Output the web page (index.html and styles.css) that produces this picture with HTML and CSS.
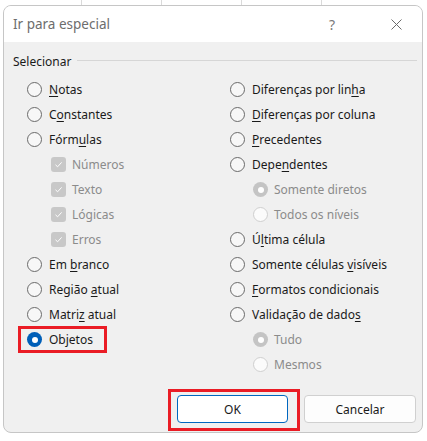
FILE: index.html
```html
<!DOCTYPE html>
<html lang="pt">
<head>
<meta charset="utf-8">
<title>Ir para especial</title>
<link rel="stylesheet" href="styles.css">
</head>
<body>
<div class="sheet">
  <span class="cell"></span><span class="cell"></span><span class="cell"></span><span class="cell"></span>
</div>
<div class="dialog">
  <div class="titlebar">
    <span class="title">Ir para especial</span>
    <span class="help">?</span>
    <span class="close">
      <svg width="11" height="11" viewBox="0 0 11 11"><path d="M0.5 0.5 L10.5 10.5 M10.5 0.5 L0.5 10.5" stroke="#6b6b6b" stroke-width="1" fill="none"/></svg>
    </span>
  </div>
  <div class="content">
    <div class="legend"><span>Selecionar</span></div>
    <div class="columns">
      <div class="col">
        <div class="row"><span class="radio"></span><span class="label"><u>N</u>otas</span></div>
        <div class="row"><span class="radio"></span><span class="label">C<u>o</u>nstantes</span></div>
        <div class="row"><span class="radio"></span><span class="label">Fórm<u>u</u>las</span></div>
        <div class="row sub-check disabled"><span class="check"><svg width="15" height="15" viewBox="0 0 15 15"><path d="M4.5 7.8 L6.6 9.8 L10.6 5.4" stroke="#fff" stroke-width="1" fill="none"/></svg></span><span class="label">Números</span></div>
        <div class="row sub-check disabled"><span class="check"><svg width="15" height="15" viewBox="0 0 15 15"><path d="M4.5 7.8 L6.6 9.8 L10.6 5.4" stroke="#fff" stroke-width="1" fill="none"/></svg></span><span class="label">Texto</span></div>
        <div class="row sub-check disabled"><span class="check"><svg width="15" height="15" viewBox="0 0 15 15"><path d="M4.5 7.8 L6.6 9.8 L10.6 5.4" stroke="#fff" stroke-width="1" fill="none"/></svg></span><span class="label">Lógicas</span></div>
        <div class="row sub-check disabled"><span class="check"><svg width="15" height="15" viewBox="0 0 15 15"><path d="M4.5 7.8 L6.6 9.8 L10.6 5.4" stroke="#fff" stroke-width="1" fill="none"/></svg></span><span class="label">Erros</span></div>
        <div class="row"><span class="radio"></span><span class="label">Em <u>b</u>ranco</span></div>
        <div class="row"><span class="radio"></span><span class="label">Região <u>a</u>tual</span></div>
        <div class="row"><span class="radio"></span><span class="label">Matri<u>z</u> atual</span></div>
        <div class="row marked-item"><span class="radio selected"></span><span class="label">Objetos</span></div>
      </div>
      <div class="col">
        <div class="row"><span class="radio"></span><span class="label">Diferenças por lin<u>h</u>a</span></div>
        <div class="row"><span class="radio"></span><span class="label"><u>D</u>iferenças por coluna</span></div>
        <div class="row"><span class="radio"></span><span class="label"><u>P</u>recedentes</span></div>
        <div class="row"><span class="radio"></span><span class="label">Depe<u>n</u>dentes</span></div>
        <div class="row sub-radio disabled"><span class="radio selected"></span><span class="label">Somente diretos</span></div>
        <div class="row sub-radio disabled"><span class="radio"></span><span class="label">Todos os níveis</span></div>
        <div class="row"><span class="radio"></span><span class="label">Ú<u>l</u>tima célula</span></div>
        <div class="row"><span class="radio"></span><span class="label">Somente células <u>v</u>isíveis</span></div>
        <div class="row"><span class="radio"></span><span class="label"><u>F</u>ormatos condicionais</span></div>
        <div class="row"><span class="radio"></span><span class="label">Validação de dado<u>s</u></span></div>
        <div class="row sub-radio disabled"><span class="radio selected"></span><span class="label">Tudo</span></div>
        <div class="row sub-radio disabled"><span class="radio"></span><span class="label">Mesmos</span></div>
      </div>
    </div>
    <div class="buttons">
      <button class="btn primary marked-btn">OK</button>
      <button class="btn">Cancelar</button>
    </div>
  </div>
</div>
</body>
</html>
```
FILE: styles.css
```css
html, body {
  margin: 0;
  padding: 0;
}
body {
  width: 427px;
  height: 441px;
  background: #ffffff;
  font-family: "Noto Sans", "Liberation Sans", sans-serif;
  overflow: hidden;
}
.sheet {
  height: 5px;
  display: flex;
  padding-left: 81px;
}
.cell {
  width: 80px;
  flex: none;
  border-left: 1px solid #dadada;
  box-sizing: border-box;
}
.dialog {
  margin-left: 3px;
  width: 420px;
  height: 428px;
  box-sizing: border-box;
  border: 1px solid #c6c6c6;
  border-radius: 8px;
  overflow: hidden;
  display: flex;
  flex-direction: column;
  background: #f0f0f0;
}
.titlebar {
  height: 36px;
  flex: none;
  background: #ffffff;
  display: flex;
  align-items: center;
  padding-left: 9px;
}
.title {
  font-size: 13.5px;
  color: #6d6d6d;
  flex: 1;
}
.help {
  font-size: 14px;
  color: #7a7a7a;
  width: 10px;
  margin-right: 52px;
}
.close {
  display: flex;
  width: 11px;
  height: 11px;
  margin-right: 20px;
}
.content {
  flex: 1;
  display: flex;
  flex-direction: column;
  padding: 0 5px 9px 9px;
}
.legend {
  display: flex;
  align-items: center;
  height: 16px;
  margin-top: 11px;
  font-size: 12px;
  color: #1a1a1a;
}
.legend::after {
  content: "";
  flex: 1;
  height: 1px;
  background: #d6d6d6;
  margin-left: 6px;
  margin-top: -1px;
}
.columns {
  display: grid;
  grid-template-columns: 217px 1fr;
  margin-top: 8px;
}
.col {
  display: flex;
  flex-direction: column;
}
.col:first-child {
  padding-left: 14px;
}
.row {
  height: 25px;
  display: flex;
  align-items: center;
  gap: 7px;
  font-size: 12px;
  color: #1a1a1a;
  position: relative;
}
.label u {
  text-underline-offset: 2px;
}
.radio {
  width: 15px;
  height: 15px;
  box-sizing: border-box;
  border: 1px solid #6a6a6a;
  border-radius: 50%;
  background: #f7f7f7;
  flex: none;
  display: flex;
  align-items: center;
  justify-content: center;
}
.radio.selected {
  border: none;
  background: #005fb8;
}
.radio.selected::after {
  content: "";
  width: 6px;
  height: 6px;
  border-radius: 50%;
  background: #ffffff;
}
.disabled {
  color: #8b8b8b;
}
.sub-check {
  padding-left: 24px;
  gap: 6px;
}
.sub-radio {
  padding-left: 23px;
  gap: 6px;
}
.disabled .radio {
  border-color: #cfcfcf;
  background: #fbfbfb;
}
.disabled .radio.selected {
  background: #c4c4c4;
}
.check {
  width: 15px;
  height: 15px;
  border-radius: 3px;
  background: #c8c8c8;
  flex: none;
  display: flex;
}
.marked-item::after {
  content: "";
  position: absolute;
  left: -9px;
  top: -1px;
  width: 89px;
  height: 27px;
  box-sizing: border-box;
  border: 3px solid #ea1c25;
}
.buttons {
  margin-top: auto;
  display: flex;
  justify-content: flex-end;
  gap: 16px;
  padding-right: 1px;
}
.btn {
  width: 112px;
  height: 28px;
  box-sizing: border-box;
  border: 1px solid #d0d0d0;
  border-radius: 4px;
  background: #fdfdfd;
  font-family: "Noto Sans", "Liberation Sans", sans-serif;
  font-size: 12px;
  color: #1a1a1a;
  padding: 0;
  position: relative;
}
.btn.primary {
  width: 111px;
  border-color: #0067c0;
  background: #ffffff;
}
.marked-btn::after {
  content: "";
  position: absolute;
  left: -10px;
  top: -7px;
  width: 132px;
  height: 42px;
  box-sizing: border-box;
  border: 3px solid #ea1c25;
}
```
